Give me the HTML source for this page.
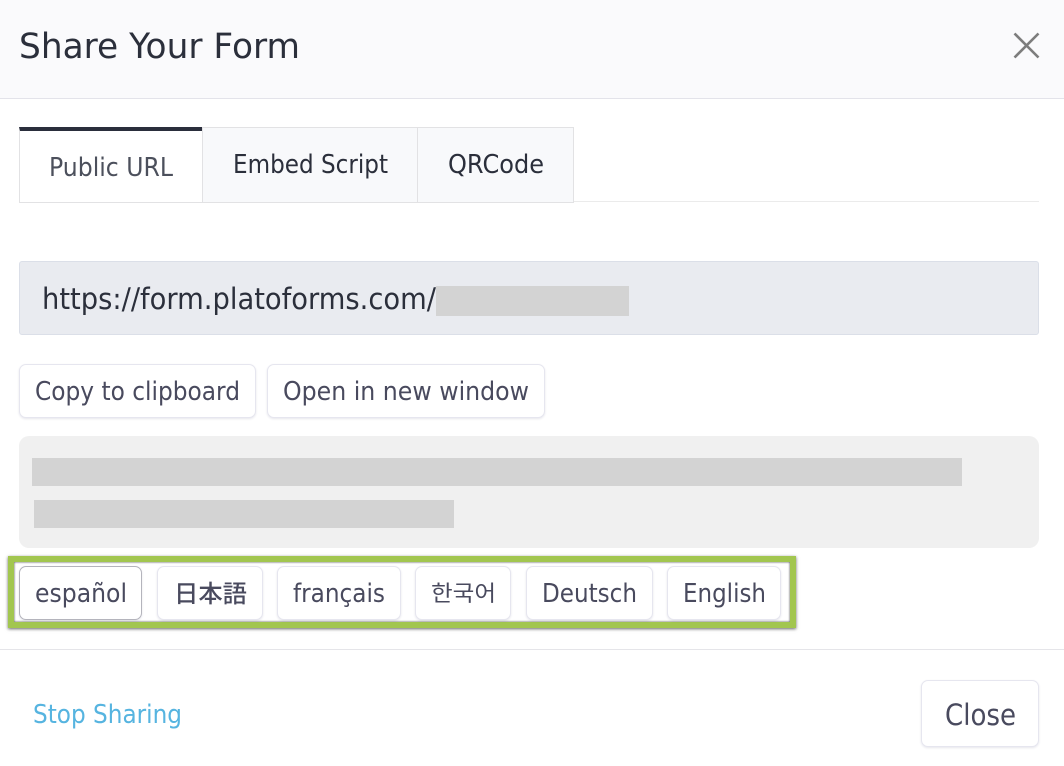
<!DOCTYPE html>
<html><head><meta charset="utf-8"><title>Share Your Form</title>
<style>
html,body{margin:0;padding:0;background:#fff}
#p{position:relative;width:1064px;height:766px;overflow:hidden;background:#fff}
#p div{position:absolute;box-sizing:border-box}
.b{background:#fff;border:1px solid #e6e6ef;border-radius:7px;box-shadow:0 1px 2px rgba(60,60,110,.13)}
.g{background:#d3d3d3}
svg{position:absolute;left:0;top:0}
text{font-family:"DejaVu Sans","Noto Sans CJK JP",sans-serif;fill:#494a5e}
</style></head><body><div id="p">
<div style="left:0;top:0;width:1064px;height:99px;background:#fafafc;border-bottom:1px solid #e3e3ea"></div>
<div style="left:574px;top:201px;width:465px;height:1px;background:#ebebeb"></div>
<div style="left:19px;top:127px;width:184px;height:76px;background:#fff;border:1px solid #e2e2e4;border-top:4px solid #2a2e3c"></div>
<div style="left:202px;top:127px;width:216px;height:76px;background:#f8f9fb;border:1px solid #e2e2e4"></div>
<div style="left:417px;top:127px;width:157px;height:76px;background:#f8f9fb;border:1px solid #e2e2e4"></div>
<div style="left:19px;top:261px;width:1020px;height:74px;background:#e9ebf0;border:1px solid #dbdfe8;border-radius:3px"></div>
<div class="g" style="left:436px;top:286px;width:193px;height:30px"></div>
<div class="b" style="left:19px;top:364px;width:237px;height:54px"></div>
<div class="b" style="left:267px;top:364px;width:278px;height:54px"></div>
<div style="left:19px;top:436px;width:1020px;height:112px;background:#f0f0f0;border-radius:10px"></div>
<div class="g" style="left:32px;top:458px;width:930px;height:28px"></div>
<div class="g" style="left:34px;top:500px;width:420px;height:28px"></div>
<div style="left:8px;top:556px;width:788px;height:72px;background:#fff;border:6px solid #a2c64f;box-shadow:0 1px 3px rgba(0,0,0,.6),inset 0 0 2px rgba(0,0,0,.75)"></div>
<div class="b" style="left:19px;top:566px;width:123px;height:54px;border-color:#b4b4bc"></div>
<div class="b" style="left:157px;top:566px;width:106px;height:54px"></div>
<div class="b" style="left:277px;top:566px;width:124px;height:54px"></div>
<div class="b" style="left:415px;top:566px;width:96px;height:54px"></div>
<div class="b" style="left:526px;top:566px;width:127px;height:54px"></div>
<div class="b" style="left:667px;top:566px;width:114px;height:54px"></div>
<div style="left:0;top:649px;width:1064px;height:1px;background:#e5e5e9"></div>
<div class="b" style="left:921px;top:680px;width:118px;height:67px"></div>
<svg width="1064" height="766" viewBox="0 0 1064 766">
<text x="19" y="58" font-size="35" textLength="281" lengthAdjust="spacingAndGlyphs" style="fill:#2b2f3b">Share Your Form</text>
<path d="M1014.5 33.5L1038.5 57.5M1038.5 33.5L1014.5 57.5" stroke="#7d7d7d" stroke-width="2.6" fill="none"/>
<text x="49" y="176" font-size="26" textLength="124" lengthAdjust="spacingAndGlyphs" style="fill:#4c505c">Public URL</text>
<text x="233" y="173" font-size="26" textLength="155" lengthAdjust="spacingAndGlyphs" style="fill:#2b2f3b">Embed Script</text>
<text x="448" y="173" font-size="26" textLength="96" lengthAdjust="spacingAndGlyphs" style="fill:#2b2f3b">QRCode</text>
<text x="42" y="309" font-size="29" textLength="394" lengthAdjust="spacingAndGlyphs" style="fill:#2b2f3b">https://form.platoforms.com/</text>
<text x="35" y="400" font-size="26" textLength="205" lengthAdjust="spacingAndGlyphs">Copy to clipboard</text>
<text x="283" y="400" font-size="26" textLength="246" lengthAdjust="spacingAndGlyphs">Open in new window</text>
<text x="35" y="602" font-size="26" textLength="92" lengthAdjust="spacingAndGlyphs">español</text>
<text x="174" y="602" font-size="24" textLength="73" lengthAdjust="spacingAndGlyphs" font-weight="500" style="font-family:'Noto Sans CJK JP',sans-serif">日本語</text>
<text x="293" y="602" font-size="26" textLength="92" lengthAdjust="spacingAndGlyphs">français</text>
<text x="431" y="601" font-size="22" textLength="65" lengthAdjust="spacingAndGlyphs" style="font-family:'Noto Sans CJK KR',sans-serif">한국어</text>
<text x="542" y="602" font-size="26" textLength="95" lengthAdjust="spacingAndGlyphs">Deutsch</text>
<text x="683" y="602" font-size="26" textLength="83" lengthAdjust="spacingAndGlyphs">English</text>
<text x="33" y="723" font-size="26" textLength="149" lengthAdjust="spacingAndGlyphs" style="fill:#56b4e0">Stop Sharing</text>
<text x="945" y="725" font-size="29" textLength="71" lengthAdjust="spacingAndGlyphs">Close</text>
</svg>
</div></body></html>
